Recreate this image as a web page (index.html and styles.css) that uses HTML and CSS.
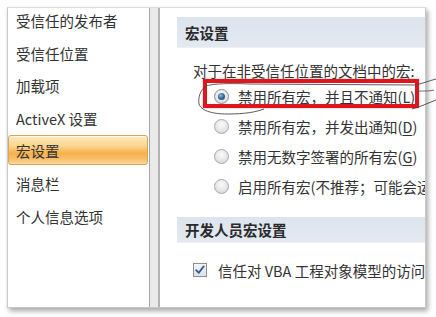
FILE: index.html
```html
<!DOCTYPE html>
<html lang="zh-CN">
<head>
<meta charset="utf-8">
<title>信任中心 - 宏设置</title>
<link rel="stylesheet" href="styles.css">
</head>
<body>
<div class="frame">
  <aside class="nav">
    <ul class="nav-list">
      <li class="nav-item">受信任的发布者</li>
      <li class="nav-item">受信任位置</li>
      <li class="nav-item">加载项</li>
      <li class="nav-item">ActiveX 设置</li>
      <li class="nav-item active">宏设置</li>
      <li class="nav-item">消息栏</li>
      <li class="nav-item">个人信息选项</li>
    </ul>
  </aside>
  <div class="splitter"></div>
  <main class="content">
    <section class="group">
      <h2 class="group-title">宏设置</h2>
      <p class="intro">对于在非受信任位置的文档中的宏:</p>
      <div class="option"><span class="radio checked"></span><span class="label">禁用所有宏，并且不通知(<u>L</u>)</span></div>
      <div class="option"><span class="radio"></span><span class="label">禁用所有宏，并发出通知(<u>D</u>)</span></div>
      <div class="option"><span class="radio"></span><span class="label">禁用无数字签署的所有宏(<u>G</u>)</span></div>
      <div class="option"><span class="radio"></span><span class="label">启用所有宏(不推荐；可能会运行有潜在危险的代码)(<u>E</u>)</span></div>
    </section>
    <section class="group dev">
      <h2 class="group-title short">开发人员宏设置</h2>
      <div class="check-row">
        <span class="checkbox"><svg viewBox="0 0 14 14" width="12" height="12"><path d="M2.5 7.2 L5.6 10.3 L11.3 2.8" fill="none" stroke="#35598a" stroke-width="2.1" stroke-linecap="round" stroke-linejoin="round"/></svg></span>
        <span class="label">信任对 VBA 工程对象模型的访问(<u>V</u>)</span>
      </div>
    </section>
  </main>
  <div class="mark-box"></div>
  <svg class="annotation" viewBox="0 0 436 317" width="436" height="317">
    <path d="M436 79 C428 81 422 84 414 85 L250 84 C225 83 212 84 206 86 C200 90 198 98 199 104 C201 110 210 114 228 114 C245 114 256 112 264 109" fill="none" stroke="#4a4a4a" stroke-width="0.9"/>
    <path d="M412 109 C420 107 428 103 436 100" fill="none" stroke="#4a4a4a" stroke-width="0.9"/>
    <path d="M416 92 C420 90 426 92 434 90" fill="none" stroke="#4a4a4a" stroke-width="0.8"/>
  </svg>
</div>
</body>
</html>
```
FILE: styles.css
```css
* { box-sizing: border-box; }
html, body { margin: 0; padding: 0; background: #ffffff; }
body {
  width: 436px;
  height: 317px;
  overflow: hidden;
  font-family: "Noto Sans CJK SC", "Microsoft YaHei", sans-serif;
  font-size: 14.5px;
  color: #333333;
}
.frame {
  position: relative;
  margin: 7px 0 0 7px;
  width: 419px;
  height: 301px;
  border: 1px solid #c8c8c8;
  border-top-color: #dcdcdc;
  background: #ffffff;
  display: flex;
  box-shadow: 2px 3px 5px rgba(0, 0, 0, 0.35);
}
.nav {
  width: 141px;
  flex: none;
  overflow: hidden;
}
.nav-list {
  list-style: none;
  margin: -3px 0 0 0;
  padding: 0;
}
.nav-item {
  height: 30px;
  line-height: 30px;
  margin: 0 1px 2.6px 0;
  padding-left: 7px;
  white-space: nowrap;
  border: 1px solid transparent;
  border-radius: 3px;
}
.nav-item.active {
  border-color: #d6a760;
  background: linear-gradient(#fde9bd 0%, #fbd690 35%, #f7b04c 62%, #f9c271 85%, #fbd898 100%);
  box-shadow: inset 0 1px 0 rgba(255, 255, 255, 0.6);
}
.splitter {
  width: 11px;
  flex: none;
  border-left: 1px solid #a6a6a6;
  border-right: 2px solid #b3b3b3;
  background: #eaeaea;
}
.content {
  flex: 1;
  overflow: hidden;
  padding: 9px 0 0 17px;
}
.group-title {
  margin: 0;
  height: 31px;
  line-height: 31px;
  padding-left: 8px;
  font-size: 14.5px;
  font-weight: bold;
  color: #2a2a2a;
  white-space: nowrap;
  background: linear-gradient(#dce4ee, #e3e9f1);
  border-bottom: 1px solid #edf1f6;
}
.group-title.short {
  height: 26px;
  line-height: 26px;
}
.intro {
  margin: 13px 0 0 0;
  padding-left: 16px;
  line-height: 20px;
  white-space: nowrap;
}
.option {
  height: 30px;
  display: flex;
  align-items: center;
  gap: 9px;
  padding-left: 37px;
  white-space: nowrap;
}
.radio {
  position: relative;
  flex: none;
  width: 15px;
  height: 15px;
  border-radius: 50%;
  border: 1px solid #a9a9a9;
  background: radial-gradient(circle at 50% 35%, #fbfbfb 0%, #e4e4e4 60%, #cfcfcf 100%);
}
.radio.checked {
  border-color: #8c8c8c;
}
.radio.checked::after {
  content: "";
  position: absolute;
  left: 3px;
  top: 3px;
  width: 7px;
  height: 7px;
  border-radius: 50%;
  background: radial-gradient(circle at 40% 35%, #8dbde3 0%, #3a6c9e 45%, #1b3f66 100%);
}
.dev {
  margin-top: 16px;
}
.check-row {
  margin-top: 12px;
  height: 30px;
  display: flex;
  align-items: center;
  gap: 11px;
  padding-left: 16px;
  white-space: nowrap;
}
.checkbox {
  flex: none;
  width: 14px;
  height: 14px;
  border: 1px solid #8e8e8e;
  background: linear-gradient(#f1f4f8, #dbe2ea);
  display: flex;
  align-items: center;
  justify-content: center;
}
.label u { text-underline-offset: 2px; }
.mark-box {
  position: absolute;
  left: 195px;
  top: 71px;
  width: 216px;
  height: 29px;
  border: 4px solid #e0161e;
  box-shadow: 0 0 2px rgba(120, 0, 0, 0.35);
  pointer-events: none;
}
.annotation {
  position: absolute;
  left: -8px;
  top: -8px;
  pointer-events: none;
  overflow: visible;
}
```
